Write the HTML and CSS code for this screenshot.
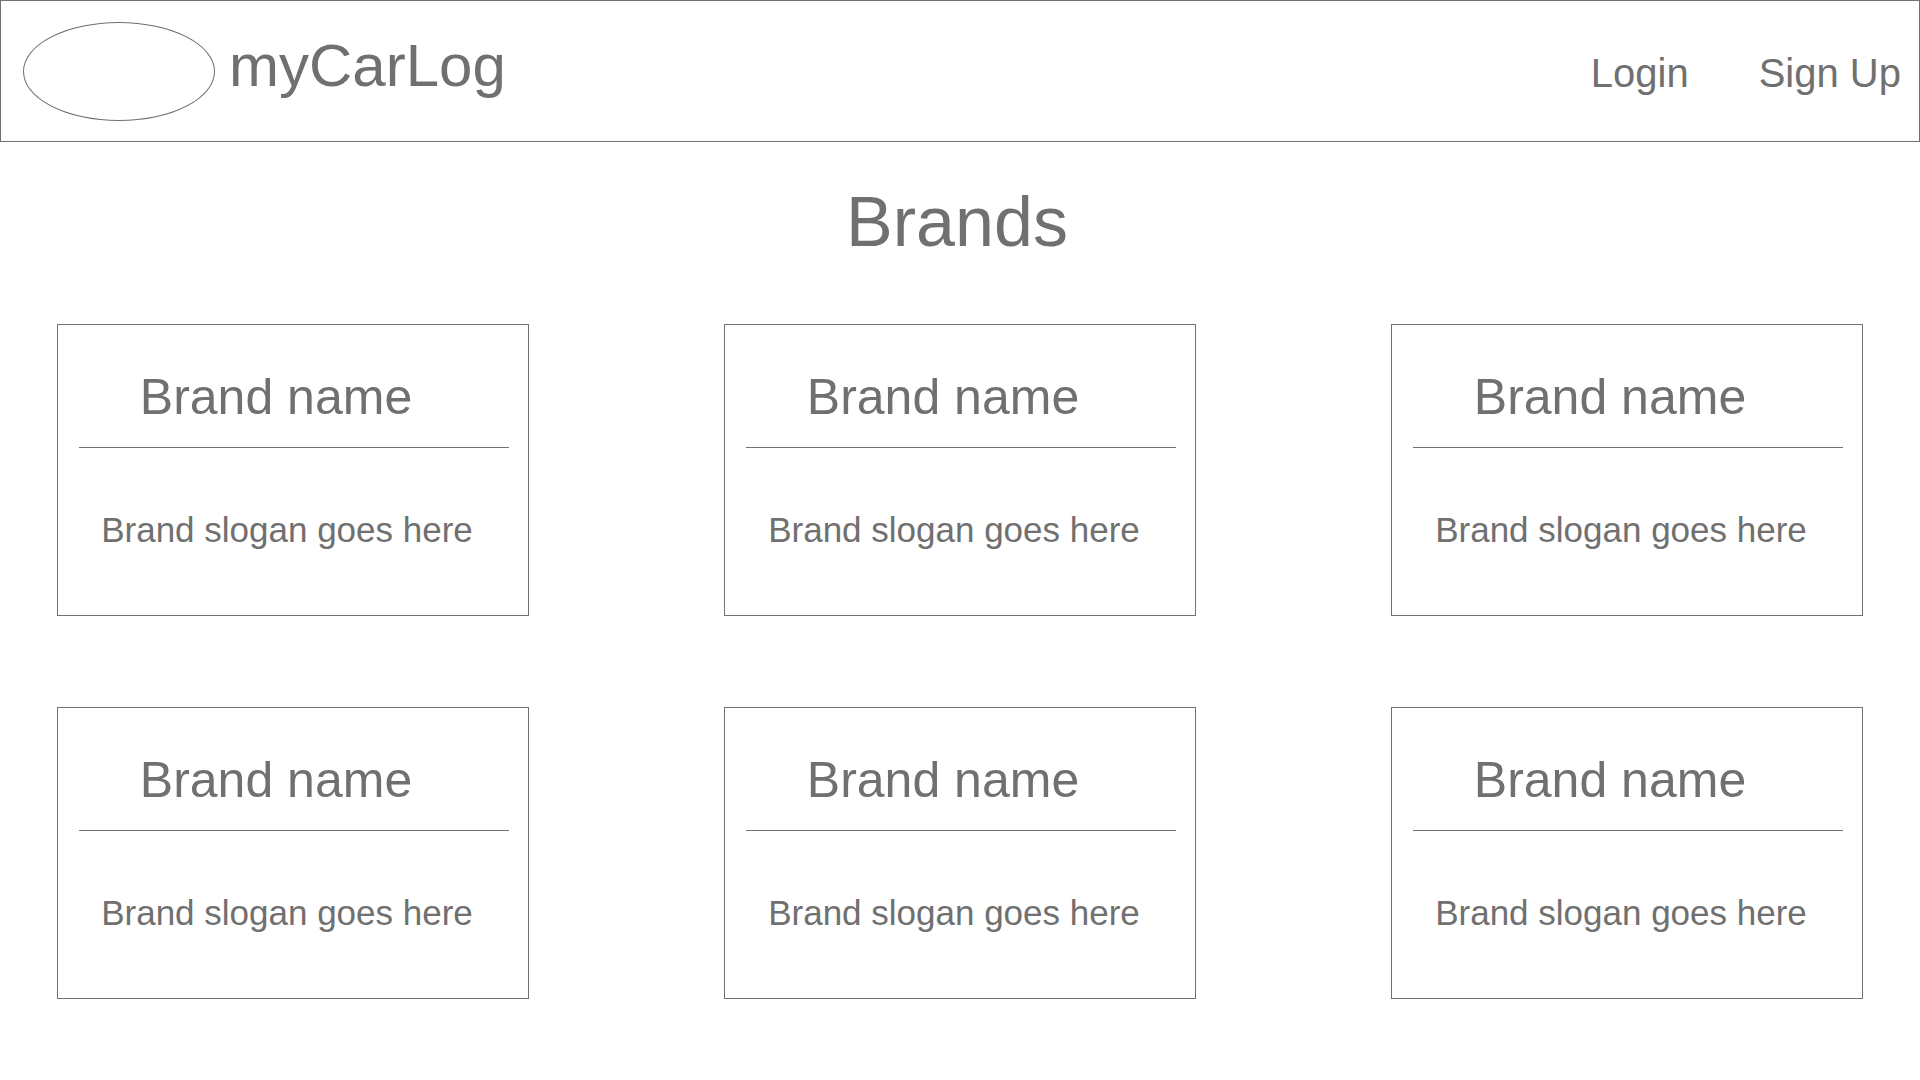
FILE: index.html
```html
<!DOCTYPE html>
<html lang="en">
<head>
<meta charset="utf-8">
<meta name="viewport" content="width=device-width, initial-scale=1">
<title>myCarLog</title>
<link rel="stylesheet" href="styles.css">
</head>
<body>
<header class="site-header">
  <a class="brand" href="#">
    <span class="logo"></span>
    <span class="brand-text">myCarLog</span>
  </a>
  <nav class="nav">
    <a href="#">Login</a>
    <a href="#">Sign Up</a>
  </nav>
</header>
<main class="content">
  <h1 class="title">Brands</h1>
  <div class="grid">
    <article class="card"><h2 class="name">Brand name</h2><p class="slogan">Brand slogan goes here</p></article>
    <article class="card"><h2 class="name">Brand name</h2><p class="slogan">Brand slogan goes here</p></article>
    <article class="card"><h2 class="name">Brand name</h2><p class="slogan">Brand slogan goes here</p></article>
    <article class="card"><h2 class="name">Brand name</h2><p class="slogan">Brand slogan goes here</p></article>
    <article class="card"><h2 class="name">Brand name</h2><p class="slogan">Brand slogan goes here</p></article>
    <article class="card"><h2 class="name">Brand name</h2><p class="slogan">Brand slogan goes here</p></article>
  </div>
</main>
</body>
</html>
```
FILE: styles.css
```css
* {
  box-sizing: border-box;
}

body {
  margin: 0;
  background: #fff;
  color: #707070;
  font-family: "Liberation Sans", Arial, sans-serif;
}

a {
  color: inherit;
  text-decoration: none;
}

.site-header {
  display: flex;
  align-items: center;
  justify-content: space-between;
  padding: 21px 18px 20px 22px;
  border: 1px solid #707070;
}

.brand {
  display: flex;
  gap: 14px;
}

.logo {
  width: 192px;
  height: 99px;
  border: 1px solid #707070;
  border-radius: 50%;
}

.brand-text {
  font-size: 60px;
  line-height: 88px;
}

.nav {
  display: flex;
  gap: 70px;
  padding-top: 3px;
  font-size: 40px;
  line-height: 48px;
}

.content {
  padding: 40px 57px 80px;
}

.title {
  margin: 0 0 62px;
  padding-right: 6px;
  font-size: 70px;
  font-weight: 400;
  line-height: 80px;
  text-align: center;
}

.grid {
  display: grid;
  grid-template-columns: repeat(3, minmax(0, 472px));
  justify-content: space-between;
  gap: 91px 40px;
}

.card {
  padding: 42px 19px 62px 21px;
  border: 1px solid #707070;
  text-align: center;
}

.name {
  margin: 0;
  padding: 0 36px 20px 0;
  border-bottom: 1px solid #707070;
  font-size: 50px;
  font-weight: 400;
  line-height: 60px;
}

.slogan {
  margin: 0;
  padding: 59px 14px 0 0;
  font-size: 35px;
  line-height: 46px;
}
```
